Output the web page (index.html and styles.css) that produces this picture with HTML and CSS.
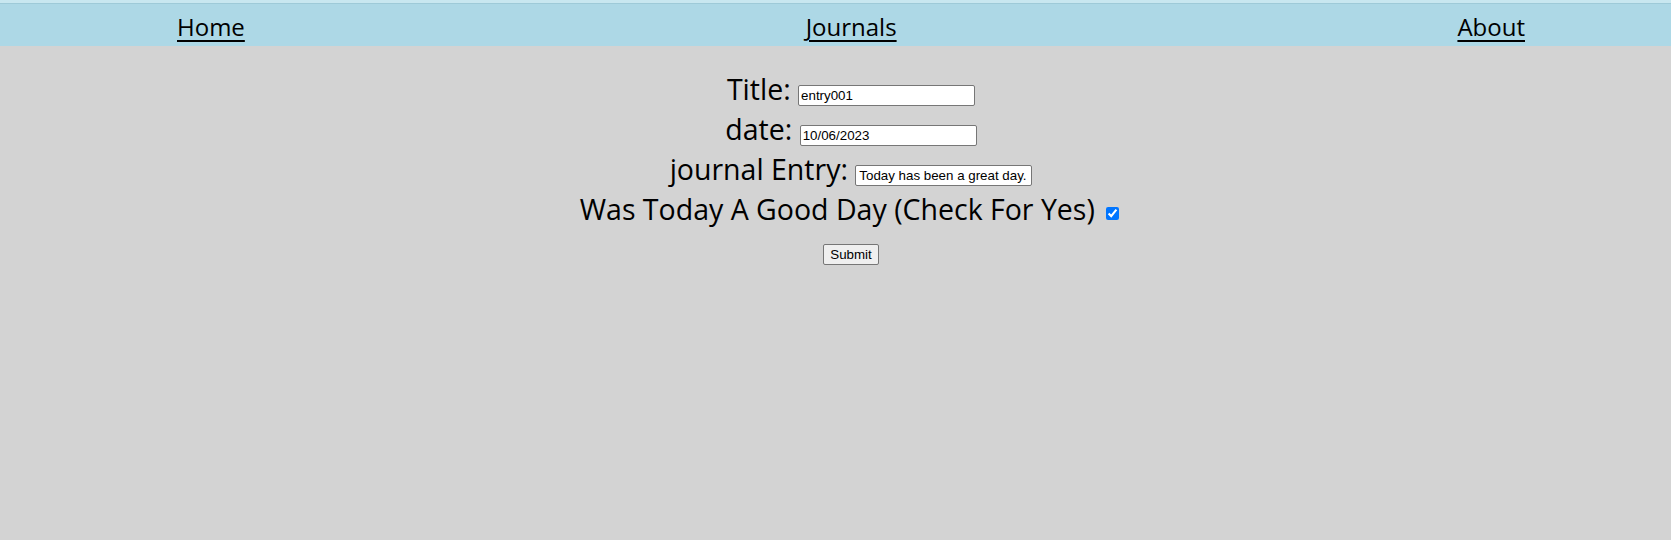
FILE: index.html
```html
<!DOCTYPE html>
<html lang="en">
<head>
<meta charset="utf-8">
<title>Journal</title>
<link rel="stylesheet" href="styles.css">
</head>
<body>
<nav class="nav">
  <a class="nav-link" href="#">Home</a>
  <a class="nav-link" href="#">Journals</a>
  <a class="nav-link" href="#">About</a>
</nav>
<form class="entry-form">
  <div class="row"><label class="label" for="title">Title:</label> <input class="field" id="title" type="text" value="entry001"></div>
  <div class="row"><label class="label" for="date">date:</label> <input class="field" id="date" type="text" value="10/06/2023"></div>
  <div class="row"><label class="label" for="entry">journal Entry:</label> <input class="field field-entry" id="entry" type="text" value="Today has been a great day."></div>
  <div class="row"><label class="label" for="good">Was Today A Good Day (Check For Yes)</label> <input class="check" id="good" type="checkbox" checked></div>
  <div class="submit-row"><button class="submit" type="submit">Submit</button></div>
</form>
</body>
</html>
```
FILE: styles.css
```css
html, body {
  margin: 0;
  padding: 0;
  background: #d3d3d3;
}

body {
  font-family: "Open Sans", "Noto Sans", sans-serif;
  color: #000;
}

.nav {
  display: flex;
  justify-content: space-between;
  align-items: flex-start;
  height: 43px;
  padding: 0 146px 0 177px;
  background: #add8e6;
  border-top: 3px solid #c8e7f0;
  box-shadow: inset 0 1px 0 #9ecad8;
}

.nav-link {
  color: #000;
  font-size: 24px;
  line-height: 48px;
  text-decoration: underline;
  text-decoration-thickness: 2px;
  text-underline-offset: 4px;
}

.entry-form {
  margin: 0;
  padding: 23px 0 0 31px;
}

.row {
  text-align: center;
  font-size: 28.5px;
  line-height: 40px;
  height: 40px;
}

.field {
  font-family: "Liberation Sans", Arial, sans-serif;
  font-size: 13.333px;
  width: 177px;
  height: 21px;
  box-sizing: border-box;
  padding: 1px 2px;
  border: 1px solid #767676;
  border-radius: 2px;
  background: #fff;
  color: #000;
  vertical-align: baseline;
}

.field-entry {
  padding: 1px 2px 1px 3px;
}

.check {
  width: 13px;
  height: 13px;
  margin: 3px 3px 3px 4px;
  accent-color: #0075ff;
}

.submit-row {
  text-align: center;
  margin-top: 14px;
  line-height: 21px;
}

.submit {
  font-family: "Liberation Sans", Arial, sans-serif;
  font-size: 13.333px;
  height: 21px;
  padding: 1px 6px;
  border: 1px solid #767676;
  border-radius: 2px;
  background: #efefef;
  color: #000;
}
```
